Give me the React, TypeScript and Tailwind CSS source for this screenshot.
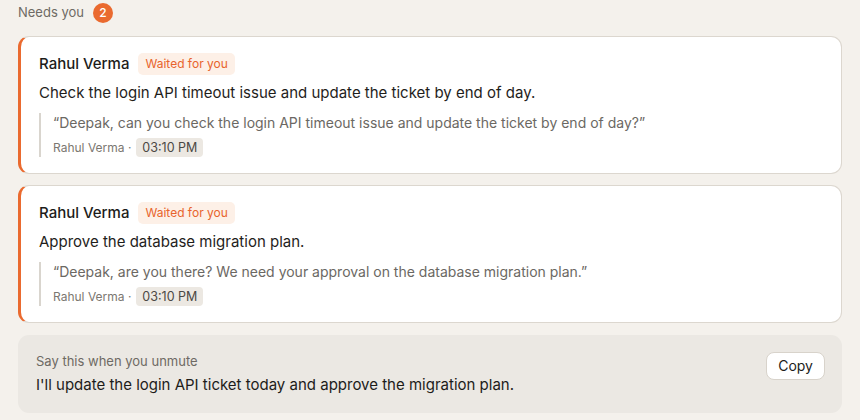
const items = [
  {
    name: 'Rahul Verma',
    task: 'Check the login API timeout issue and update the ticket by end of day.',
    quote: '“Deepak, can you check the login API timeout issue and update the ticket by end of day?”',
    time: '03:10 PM',
  },
  {
    name: 'Rahul Verma',
    task: 'Approve the database migration plan.',
    quote: '“Deepak, are you there? We need your approval on the database migration plan.”',
    time: '03:10 PM',
  },
];

function App() {
  return (
    <div
      className="min-h-screen bg-[#f4f1ec] px-[18px] pt-[3px] pb-4 text-[#1d1c1a]"
      style={{ fontFamily: 'Inter, "Noto Sans", sans-serif' }}
    >
      {/* Section header */}
      <div className="flex h-[20px] items-center gap-[9px]">
        <span className="text-[13px] text-[#6e6a64]">Needs you</span>
        <span className="flex h-[20px] w-[20px] items-center justify-center rounded-full bg-[#ea6a2f] text-[12px] font-medium text-white">
          2
        </span>
      </div>

      <div className="mt-[13px] flex flex-col gap-[11px]">
        {items.map((item, i) => (
          <div
            key={i}
            className="rounded-[11px] border border-l-[3px] border-[#dcd7cf] border-l-[#ea6a2f] bg-white pt-4 pb-4 pl-[18px] pr-5"
          >
            <div className="flex h-[22px] items-center gap-[9px]">
              <span className="text-[15px] font-medium text-[#1d1c1a]">{item.name}</span>
              <span className="rounded-[5px] bg-[#fdf0e7] px-[7px] py-[3px] text-[12px] leading-[16px] text-[#e8642c]">
                Waited for you
              </span>
            </div>
            <p className="mt-[7px] text-[15px] leading-[22px] text-[#1f1e1c]">{item.task}</p>
            <div className="mt-[9px] border-l-2 border-[#d9d5ce] pl-3">
              <p className="text-[14px] leading-[20px] text-[#6b6863]">{item.quote}</p>
              <div className="mt-[5px] flex items-center gap-[5px] text-[12px] text-[#7b7771]">
                <span>{item.name} ·</span>
                <span className="rounded-[4px] bg-[#ece8e2] px-[6px] py-[1px] text-[12.5px] leading-[17px] text-[#4b4844]">
                  {item.time}
                </span>
              </div>
            </div>
          </div>
        ))}
      </div>

      {/* Suggested reply */}
      <div className="mt-[12px] flex items-start justify-between rounded-[11px] bg-[#ebe8e3] pt-[16px] pb-[17px] pl-[18px] pr-[17px]">
        <div>
          <p className="text-[13px] leading-[20px] text-[#6e6a64]">Say this when you unmute</p>
          <p className="mt-[3px] text-[15px] leading-[22px] text-[#1d1c1a]">
            I'll update the login API ticket today and approve the migration plan.
          </p>
        </div>
        <button className="mt-[1px] rounded-[8px] border border-[#d8d3cb] bg-white px-[11px] py-[4px] text-[14px] leading-[18px] text-[#1d1c1a]">
          Copy
        </button>
      </div>
    </div>
  );
}

export default App;
